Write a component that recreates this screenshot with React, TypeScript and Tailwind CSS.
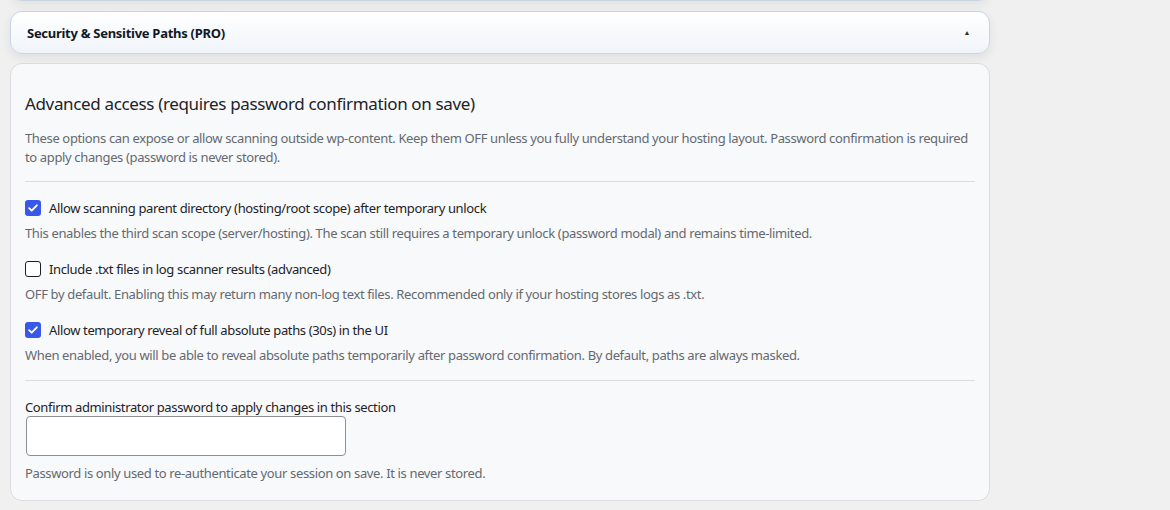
import React, { useState } from 'react';

type Option = {
  id: string;
  label: string;
  help: string;
  checked: boolean;
};

const OPTIONS: Option[] = [
  {
    id: 'parent',
    label: 'Allow scanning parent directory (hosting/root scope) after temporary unlock',
    help: 'This enables the third scan scope (server/hosting). The scan still requires a temporary unlock (password modal) and remains time-limited.',
    checked: true,
  },
  {
    id: 'txt',
    label: 'Include .txt files in log scanner results (advanced)',
    help: 'OFF by default. Enabling this may return many non-log text files. Recommended only if your hosting stores logs as .txt.',
    checked: false,
  },
  {
    id: 'reveal',
    label: 'Allow temporary reveal of full absolute paths (30s) in the UI',
    help: 'When enabled, you will be able to reveal absolute paths temporarily after password confirmation. By default, paths are always masked.',
    checked: true,
  },
];

const Checkbox: React.FC<{ checked: boolean; onChange: () => void }> = ({ checked, onChange }) => (
  <button
    type="button"
    onClick={onChange}
    className={`flex h-4 w-4 shrink-0 items-center justify-center rounded-[3px] ${
      checked ? 'bg-[#3858e9]' : 'border border-[#1e1e1e] bg-white'
    }`}
  >
    {checked && (
      <svg viewBox="0 0 16 16" className="h-[14px] w-[14px]" fill="none">
        <path d="M3.6 8.2l2.9 2.9 5.9-6.2" stroke="white" strokeWidth="2.1" strokeLinecap="round" strokeLinejoin="round" />
      </svg>
    )}
  </button>
);

const App: React.FC = () => {
  const [opts, setOpts] = useState(OPTIONS);

  const toggle = (id: string) =>
    setOpts(prev => prev.map(o => (o.id === id ? { ...o, checked: !o.checked } : o)));

  return (
    <div className="min-h-[510px] w-[1170px] overflow-hidden bg-[#f0f0f1] font-['Noto_Sans','Open_Sans',sans-serif] text-[13px] tracking-[-0.36px] text-[#1d2327]">
      <div className="w-[990px] pl-[10px]">
        {/* tail of the previous panel */}
        <div className="-mt-[20px] h-[21px] rounded-b-xl border border-[#c9d5e3] bg-[#f3f6fa] shadow-[0_4px_10px_rgba(0,0,0,0.06)]" />

        {/* accordion header */}
        <div className="mt-[10px] flex h-[43px] items-center justify-between rounded-xl border border-[#c9d5e3] bg-gradient-to-b from-white to-[#f0f4f9] pl-[16px] pr-[19px] shadow-[0_4px_12px_rgba(0,0,0,0.07)]">
          <h3 className="pt-[2px] text-[13px] font-bold tracking-[-0.28px] text-[#101828]">Security &amp; Sensitive Paths (PRO)</h3>
          <span className="text-[7px] leading-none text-[#2c3338]">▲</span>
        </div>

        {/* panel */}
        <div className="mt-[9px] rounded-xl border border-[#dcdcde] bg-[#f8f9fb] px-[14px] pt-[29px] pb-[17px]">
          <h2 className="text-[17px] leading-[22px] tracking-[-0.35px] text-[#1d2327]">
            Advanced access (requires password confirmation on save)
          </h2>
          <p className="mt-[14px] leading-[19px] text-[#646970]">
            These options can expose or allow scanning outside wp-content. Keep them OFF unless you fully understand your hosting layout. Password confirmation is required to apply changes (password is never stored).
          </p>

          <hr className="mt-[14px] border-[#dcdcde]" />

          {opts.map(o => (
            <div key={o.id}>
              <label className="mt-[16px] flex h-[20px] cursor-pointer items-center gap-[8px]">
                <Checkbox checked={o.checked} onChange={() => toggle(o.id)} />
                <span className="leading-[20px]">{o.label}</span>
              </label>
              <p className="mt-[6px] leading-[19px] text-[#646970]">{o.help}</p>
            </div>
          ))}

          <hr className="mt-[15px] border-[#dcdcde]" />

          <label className="mt-[17px] block leading-[18px]">
            Confirm administrator password to apply changes in this section
          </label>
          <input
            type="password"
            className="ml-px block h-[40px] w-[320px] rounded-[4px] border border-[#8c8f94] bg-white px-2 outline-none"
          />
          <p className="mt-[8px] leading-[19px] text-[#646970]">
            Password is only used to re-authenticate your session on save. It is never stored.
          </p>
        </div>
      </div>
    </div>
  );
};

export default App;
